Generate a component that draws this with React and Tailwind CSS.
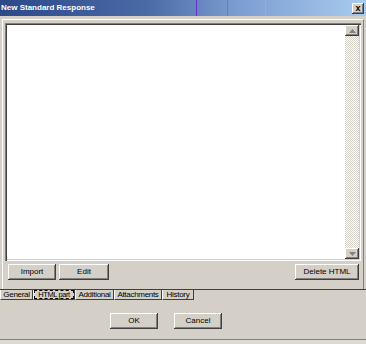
import React from "react";

const raised =
  "bg-[#d4d0c8] shadow-[inset_-1px_-1px_#404040,inset_1px_1px_#ffffff,inset_-2px_-2px_#808080]";

function Btn({ label, className = "" }) {
  return (
    <div className={`${raised} h-[16px] flex items-center justify-center text-[8px] leading-none ${className}`}>
      {label}
    </div>
  );
}

function Tab({ label, selected, className = "" }) {
  return (
    <div
      className={`h-[10px] border-r border-b border-[#404040] border-l border-l-white flex items-center justify-center text-[8px] leading-none tracking-[-0.3px] whitespace-nowrap ${className}`}
    >
      {selected ? (
        <span className="w-full h-[9px] border border-dashed border-black flex items-center justify-center text-[7.5px] tracking-[-0.4px]">
          {label}
        </span>
      ) : (
        label
      )}
    </div>
  );
}

export default function App() {
  return (
    <div
      className="w-[366px] h-[344px] bg-[#d4d0c8] flex flex-col text-black overflow-hidden"
      style={{ fontFamily: '"Liberation Sans", Arial, sans-serif' }}
    >
      {/* title bar */}
      <div className="relative h-[16px] shrink-0 flex items-center bg-[linear-gradient(90deg,#2c4988,#4a6aa6_40%,#7c9dd0_65%,#a8cbf0)]">
        <span className="ml-[1px] text-white text-[8px] font-bold leading-none">
          New Standard Response
        </span>
        <div className="absolute left-[196px] top-0 h-[16px] w-[1px] bg-[#6a2cd0]" />
        <div className="absolute left-[227px] top-0 h-[16px] w-[1px] bg-[#5f7fb8]" />
        <div className="absolute left-[265px] top-0 h-[16px] w-[1px] bg-[#8fb0dc]" />
        <div className={`absolute left-[352px] top-[3px] w-[12px] h-[11px] ${raised} flex items-center justify-center text-[9px] font-bold leading-none`}>
          x
        </div>
      </div>

      {/* tab page frame */}
      <div className="mt-[3px] mx-[2px] h-[270px] border-t border-l border-white border-r border-r-[#808080] pt-[3px] px-[2px] flex flex-col">
        <div className="h-[238px] shadow-[inset_1px_1px_#808080,inset_2px_2px_#404040,inset_-1px_-1px_#ffffff,inset_-2px_-2px_#d4d0c8] p-[2px] flex">
          <div className="flex-1 bg-white" />
          <div className="w-[14px] flex flex-col">
            <div className={`${raised} h-[11px] flex items-center justify-center`}>
              <svg width="7" height="4" viewBox="0 0 7 4">
                <path d="M3.5 0 L7 4 L0 4 Z" fill="#808080" />
              </svg>
            </div>
            <div className="flex-1 bg-[repeating-conic-gradient(#d4d0c8_0%_25%,#ffffff_0%_50%)] bg-[length:2px_2px]" />
            <div className={`${raised} h-[11px] flex items-center justify-center`}>
              <svg width="7" height="4" viewBox="0 0 7 4">
                <path d="M0 0 L7 0 L3.5 4 Z" fill="#808080" />
              </svg>
            </div>
          </div>
        </div>
        <div className="mt-[3px] flex">
          <Btn label="Import" className="w-[48px] ml-[3px]" />
          <Btn label="Edit" className="w-[50px] ml-[3px]" />
          <Btn label="Delete HTML" className="w-[64px] ml-auto mr-[2px]" />
        </div>
      </div>

      {/* tabs along the bottom */}
      <div className="h-[1px] bg-[#404040]" />
      <div className="flex">
        <Tab label="General" className="w-[33px]" />
        <Tab label="HTML part" selected className="w-[42px]" />
        <Tab label="Additional" className="w-[39px]" />
        <Tab label="Attachments" className="w-[48px]" />
        <Tab label="History" className="w-[32px]" />
      </div>

      <div className="mt-[13px] flex pl-[110px] gap-[16px]">
        <Btn label="OK" className="w-[48px]" />
        <Btn label="Cancel" className="w-[48px]" />
      </div>

      <div className="mt-auto h-[1px] bg-[#808080]" />
      <div className="h-[4px] bg-[#dcd9d2]" />
    </div>
  );
}
